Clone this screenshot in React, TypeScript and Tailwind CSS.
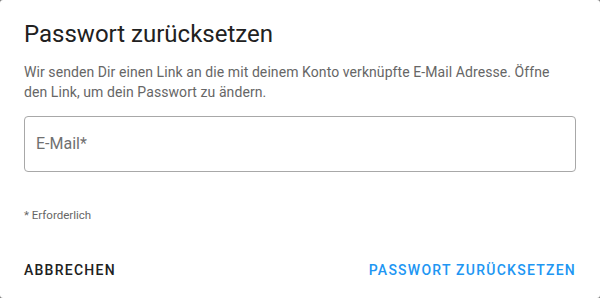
export default function App() {
  return (
    <div className="w-[600px] h-[298px] bg-[#7a7a7a]">
      <div
        className="w-[600px] h-[298px] bg-white rounded-[3px] flex flex-col"
        style={{ fontFamily: 'Roboto, "Liberation Sans", sans-serif' }}
      >
        {/* Title */}
        <h2 className="px-6 pt-[18px] text-[24px] leading-[32px] font-normal text-[#212121]">
          Passwort zurücksetzen
        </h2>

        {/* Description */}
        <p className="px-6 mt-[12px] text-[14px] leading-[20px] tracking-[0.08px] text-[#666666]">
          Wir senden Dir einen Link an die mit deinem Konto verknüpfte E-Mail Adresse. Öffne den
          Link, um dein Passwort zu ändern.
        </p>

        {/* Email field */}
        <div className="px-6 mt-[14px]">
          <div className="h-[56px] border border-[#a8a8a8] rounded-[4px] flex items-center px-[11px]">
            <input
              type="email"
              placeholder="E-Mail*"
              className="w-full outline-none text-[16px] text-[#212121] placeholder:text-[#707070] bg-transparent"
            />
          </div>
        </div>

        <p className="px-6 mt-[36px] text-[11.5px] leading-[14px] text-[#666666]">* Erforderlich</p>

        {/* Actions */}
        <div className="mt-auto flex items-center justify-between px-6 pb-[18px]">
          <button className="text-[14px] leading-[20px] font-medium tracking-[1.25px] uppercase text-[#212121]">
            Abbrechen
          </button>
          <button className="text-[14px] leading-[20px] font-medium tracking-[1.25px] uppercase text-[#2196f3]">
            Passwort zurücksetzen
          </button>
        </div>
      </div>
    </div>
  )
}
